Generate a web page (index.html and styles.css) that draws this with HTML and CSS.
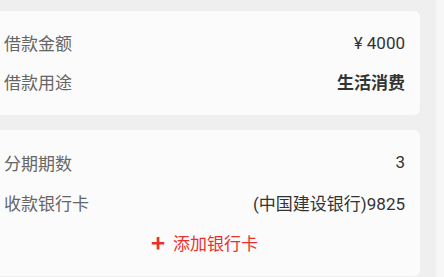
FILE: index.html
```html
<!DOCTYPE html>
<html lang="zh-CN">
  <head>
    <meta charset="UTF-8" />
    <meta name="viewport" content="width=device-width, initial-scale=1.0" />
    <title>借款确认</title>
    <link rel="stylesheet" href="styles.css">
  </head>
  <body>
    <div class="page">
      <div class="card">
        <div class="row">
          <span class="label">借款金额</span>
          <span class="value">¥ 4000</span>
        </div>
        <div class="row">
          <span class="label">借款用途</span>
          <span class="value bold">生活消费</span>
        </div>
      </div>
      <div class="card">
        <div class="row">
          <span class="label">分期期数</span>
          <span class="value">3</span>
        </div>
        <div class="row">
          <span class="label">收款银行卡</span>
          <span class="value">(中国建设银行)9825</span>
        </div>
        <div class="row add">
          <span class="plus">+</span>
          <span>添加银行卡</span>
        </div>
      </div>
    </div>
  </body>
</html>
```

FILE: styles.css
```css
body {
  margin: 0;
  height: 100vh;
  background-color: #f7f7f7;
  font-family: "Noto Sans CJK SC", "Noto Sans", sans-serif;
  overflow: hidden;
}
.page {
  width: 420px;
  height: 100vh;
  padding: 11px 16px 0 0;
  background-color: #efefef;
}
.card {
  background-color: #fbfbfb;
  border-radius: 0 6px 6px 0;
  padding: 12px 15px 14px 4px;
  margin-bottom: 15px;
}
.row {
  height: 39px;
  display: flex;
  align-items: center;
  justify-content: space-between;
  font-size: 17px;
}
.card + .card .row {
  height: 40px;
}
.label {
  color: #666;
}
.value {
  color: #333;
  font-family: Roboto, "Noto Sans CJK SC", sans-serif;
  font-size: 17px;
}
.value.bold {
  font-weight: bold;
}
.add {
  justify-content: center;
  color: #e8302e;
  gap: 8px;
}
.plus {
  font-size: 24px;
  font-weight: bold;
  line-height: 1;
}
```
